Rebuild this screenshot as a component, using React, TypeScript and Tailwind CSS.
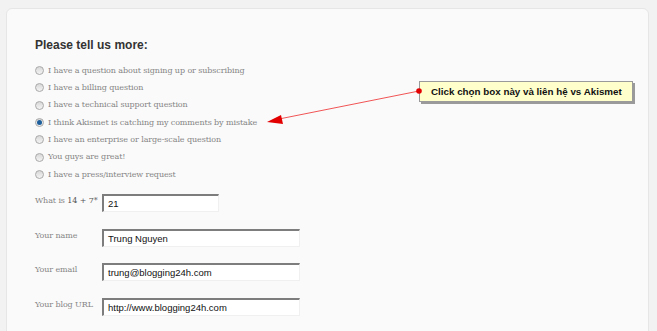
const reasons = [
  "I have a question about signing up or subscribing",
  "I have a billing question",
  "I have a technical support question",
  "I think Akismet is catching my comments by mistake",
  "I have an enterprise or large-scale question",
  "You guys are great!",
  "I have a press/interview request",
];

const slab = "font-['DejaVu_Serif',serif]";

const Radio = ({ checked }: { checked: boolean }) => (
  <span className="flex h-[9px] w-[9px] items-center justify-center rounded-full border border-[#a9a9a9] bg-gradient-to-b from-[#d8d8d8] to-[#f4f4f4]">
    {checked && <span className="h-[5px] w-[5px] rounded-full bg-[#1d5f9c]" />}
  </span>
);

const Field = ({ label, value, wide = true }: { label: React.ReactNode; value: string; wide?: boolean }) => (
  <div className="flex items-start">
    <div className={`w-[67px] whitespace-nowrap pt-[1px] text-[8px] tracking-[-0.1px] text-[#858585] ${slab}`}>{label}</div>
    <div
      className={`${wide ? "w-[198px]" : "w-[117px]"} h-[18px] border-l-2 border-t-2 border-l-[#7d7d7d] border-t-[#7d7d7d] border-r border-b border-r-[#f0f0f0] border-b-[#f0f0f0] bg-white px-[4px] font-['Liberation_Sans',sans-serif] text-[9.5px] leading-[15px] text-[#111]`}
    >
      {value}
    </div>
  </div>
);

const App = () => {
  return (
    <div className="relative h-[331px] w-[657px] overflow-hidden bg-[#f2f2f2]">
      <div className="ml-[6px] mr-[8px] mt-[8px] h-[340px] rounded-md border border-[#e6e6e6] bg-[#fafafa] pl-[28px] pt-[29px]">
        <h2 className="font-['Liberation_Sans',sans-serif] text-[12px] font-bold leading-[14px] text-[#333]">
          Please tell us more:
        </h2>

        <div className="mt-[10px]">
          {reasons.map((r, i) => (
            <div key={r} className="flex h-[17.33px] items-center gap-[4px]">
              <Radio checked={i === 3} />
              <span className={`text-[8px] tracking-[-0.1px] text-[#858585] ${slab}`}>{r}</span>
            </div>
          ))}
        </div>

        <div className="mt-[11px] flex flex-col gap-[16.5px]">
          <Field
            wide={false}
            label={
              <>
                What is <span className="text-[#555]">14 + 7*</span>
              </>
            }
            value="21"
          />
          <Field label="Your name" value="Trung Nguyen" />
          <Field label="Your email" value="trung@blogging24h.com" />
          <Field label="Your blog URL" value="http://www.blogging24h.com" />
        </div>
      </div>

      {/* callout */}
      <div className="absolute left-[419px] top-[81px] h-[21px] w-[214px] whitespace-nowrap border border-[#9a9a9a] bg-[#ffffcc] pl-[11px] font-['Liberation_Sans',sans-serif] text-[9.8px] font-bold leading-[19px] text-[#111] shadow-[2px_2px_0_#9a9a9a]">
        Click chọn box này và liên hệ vs Akismet
      </div>
      <svg className="pointer-events-none absolute left-0 top-0" width="657" height="331">
        <line x1="419" y1="91" x2="279" y2="119" stroke="#f25555" strokeWidth="1" />
        <polygon points="267,122 281,115 283,124" fill="#e30000" />
        <circle cx="419" cy="91" r="2.8" fill="#e30000" />
      </svg>
    </div>
  );
};

export default App;
